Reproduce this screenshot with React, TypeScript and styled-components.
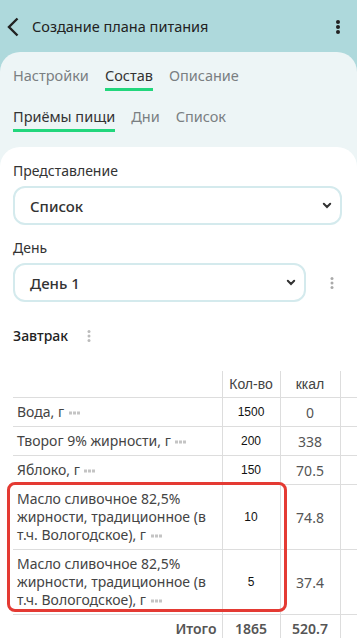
import React from "react";
import styled, { createGlobalStyle } from "styled-components";

const rows = [
  { name: "Вода, г", qty: "1500", kcal: "0" },
  { name: "Творог 9% жирности, г", qty: "200", kcal: "338" },
  { name: "Яблоко, г", qty: "150", kcal: "70.5" },
  { name: "Масло сливочное 82,5% жирности, традиционное (в т.ч. Вологодское), г", qty: "10", kcal: "74.8" },
  { name: "Масло сливочное 82,5% жирности, традиционное (в т.ч. Вологодское), г", qty: "5", kcal: "37.4" },
];

const Kebab = ({ color, size }: { color: string; size: number }) => (
  <svg width="6" height={size * 2 + 8} viewBox={`0 0 6 ${size * 2 + 8}`}>
    <circle cx="3" cy={size / 2 + 1} r={size / 2} fill={color} />
    <circle cx="3" cy={size + 4} r={size / 2} fill={color} />
    <circle cx="3" cy={size * 1.5 + 7} r={size / 2} fill={color} />
  </svg>
);

const Chevron = () => (
  <svg width="10" height="7" viewBox="0 0 10 7">
    <path d="M1.8 1.8 L5 5 L8.2 1.8" stroke="#333" strokeWidth="2" fill="none" strokeLinecap="round" />
  </svg>
);

const More = () => (
  <MoreIcon width="12" height="4" viewBox="0 0 12 4">
    <rect x="0" y="0.5" width="3" height="3" fill="#c4c4c4" />
    <rect x="4" y="0.5" width="3" height="3" fill="#c4c4c4" />
    <rect x="8" y="0.5" width="3" height="3" fill="#c4c4c4" />
  </MoreIcon>
);

const App = () => {
  return (
    <>
      <GlobalStyle />
      <Header>
        <BackButton>
          <svg width="12" height="20" viewBox="0 0 12 20">
            <path d="M10.5 1.5 L2 10 L10.5 18.5" stroke="#222" strokeWidth="2.4" fill="none" />
          </svg>
        </BackButton>
        <Title>Создание плана питания</Title>
        <HeaderMenu>
          <Kebab color="#222" size={4} />
        </HeaderMenu>
      </Header>
      <TabsPanel>
        <TabRow>
          <Tab>Настройки</Tab>
          <Tab $active>Состав</Tab>
          <Tab>Описание</Tab>
        </TabRow>
        <TabRow>
          <Tab $active>Приёмы пищи</Tab>
          <Tab>Дни</Tab>
          <Tab>Список</Tab>
        </TabRow>
        <Content>
          <Label>Представление</Label>
          <Select>
            <span>Список</span>
            <Chevron />
          </Select>
          <Label $gap>День</Label>
          <SelectRow>
            <Select>
              <span>День 1</span>
              <Chevron />
            </Select>
            <Kebab color="#aaa" size={3} />
          </SelectRow>
          <MealTitle>
            Завтрак
            <Kebab color="#bbb" size={3} />
          </MealTitle>
          <TableWrap>
            <TableClip>
              <Table>
                <colgroup>
                  <col style={{ width: 209 }} />
                  <col style={{ width: 58 }} />
                  <col style={{ width: 60 }} />
                  <col style={{ width: 60 }} />
                </colgroup>
                <thead>
                  <tr>
                    <HeadCell $blank />
                    <HeadCell>Кол-во</HeadCell>
                    <HeadCell>ккал</HeadCell>
                    <HeadCell />
                  </tr>
                </thead>
                <tbody>
                  {rows.map((r, i) => (
                    <tr key={i}>
                      <NameCell>
                        {r.name} <More />
                      </NameCell>
                      <QtyCell>{r.qty}</QtyCell>
                      <KcalCell>{r.kcal}</KcalCell>
                      <KcalCell />
                    </tr>
                  ))}
                  <tr>
                    <TotalCell $label>Итого</TotalCell>
                    <TotalCell>1865</TotalCell>
                    <TotalCell>520.7</TotalCell>
                    <TotalCell />
                  </tr>
                </tbody>
              </Table>
            </TableClip>
            <Highlight />
          </TableWrap>
        </Content>
      </TabsPanel>
    </>
  );
};

export default App;

const GlobalStyle = createGlobalStyle`
  html, body {
    margin: 0;
    overflow: hidden;
    background: #aed9dc;
    font-family: "Noto Sans", "Open Sans", sans-serif;
  }
`;

const Header = styled.div`
  height: 52px;
  display: flex;
  align-items: center;
  padding: 0 8px 0 7px;
`;

const BackButton = styled.div`
  display: flex;
  align-items: center;
  margin-top: 1px;
`;

const Title = styled.div`
  margin-left: 13px;
  font-size: 14.5px;
  color: #222;
  flex: 1;
`;

const HeaderMenu = styled.div`
  display: flex;
  margin-right: 8px;
  margin-top: 1px;
`;

const TabsPanel = styled.div`
  background: #edf5f6;
  border-radius: 20px 20px 0 0;
  padding-top: 13px;
`;

const TabRow = styled.div`
  display: flex;
  gap: 16px;
  padding: 0 13px;
  margin-bottom: 15px;
`;

const Tab = styled.div<{ $active?: boolean }>`
  font-size: 14.5px;
  line-height: 20px;
  padding-bottom: 3px;
  color: ${({ $active }) => ($active ? "#333" : "#7a7f82")};
  border-bottom: 3px solid ${({ $active }) => ($active ? "#22d67c" : "transparent")};
`;

const Content = styled.div`
  background: #fff;
  border-radius: 20px 20px 0 0;
  padding: 14px 15px 0 13px;
`;

const Label = styled.div<{ $gap?: boolean }>`
  font-size: 14px;
  line-height: 20px;
  color: #333;
  margin-top: ${({ $gap }) => ($gap ? "13px" : "0")};
  margin-bottom: 5px;
`;

const Select = styled.div`
  box-sizing: border-box;
  height: 39px;
  flex: 1;
  display: flex;
  align-items: center;
  justify-content: space-between;
  padding: 0 8px 0 15px;
  border: 2px solid #d4eaed;
  border-radius: 12px;
  font-size: 15px;
  font-weight: 500;
  color: #333;
`;

const SelectRow = styled.div`
  display: flex;
  align-items: center;
  gap: 23px;
  padding-right: 7px;
`;

const MealTitle = styled.div`
  display: flex;
  align-items: center;
  gap: 18px;
  margin-top: 24px;
  font-size: 14px;
  line-height: 20px;
  font-weight: 500;
  color: #222;
`;

const TableWrap = styled.div`
  position: relative;
  margin-top: 25px;
`;

const TableClip = styled.div`
  overflow: hidden;
  margin-right: -15px;
`;

const Table = styled.table`
  border-collapse: collapse;
  table-layout: fixed;
  width: 387px;
`;

const HeadCell = styled.th<{ $blank?: boolean }>`
  height: 25px;
  padding: 0 0 1px;
  font-family: "Liberation Sans", Arial, sans-serif;
  font-size: 14px;
  font-weight: 400;
  color: #444;
  text-align: center;
  vertical-align: middle;
  border-bottom: 1px solid #ddd;
  border-left: ${({ $blank }) => ($blank ? "none" : "1px solid #ddd")};
`;

const NameCell = styled.td`
  padding: 5px 4px;
  font-size: 14px;
  line-height: 18px;
  color: #444;
  border-bottom: 1px solid #ddd;
`;

const MoreIcon = styled.svg`
  vertical-align: middle;
  margin-left: 1px;
`;

const QtyCell = styled.td`
  text-align: center;
  font-family: "Liberation Sans", Arial, sans-serif;
  font-size: 12px;
  color: #111;
  border: 1px solid #ddd;
  border-top: none;
`;

const KcalCell = styled.td`
  text-align: center;
  font-size: 14px;
  color: #555;
  border: 1px solid #ddd;
  border-top: none;
`;

const TotalCell = styled.td<{ $label?: boolean }>`
  height: 26px;
  padding: 0 ${({ $label }) => ($label ? "5px" : "0")};
  text-align: ${({ $label }) => ($label ? "right" : "center")};
  font-size: 14px;
  font-weight: 600;
  color: #555;
  border-left: ${({ $label }) => ($label ? "none" : "1px solid #ddd")};
`;

const Highlight = styled.div`
  position: absolute;
  left: -6px;
  top: 111px;
  width: 280px;
  height: 130px;
  box-sizing: border-box;
  border: 3px solid #e43a33;
  border-radius: 8px;
  pointer-events: none;
`;
